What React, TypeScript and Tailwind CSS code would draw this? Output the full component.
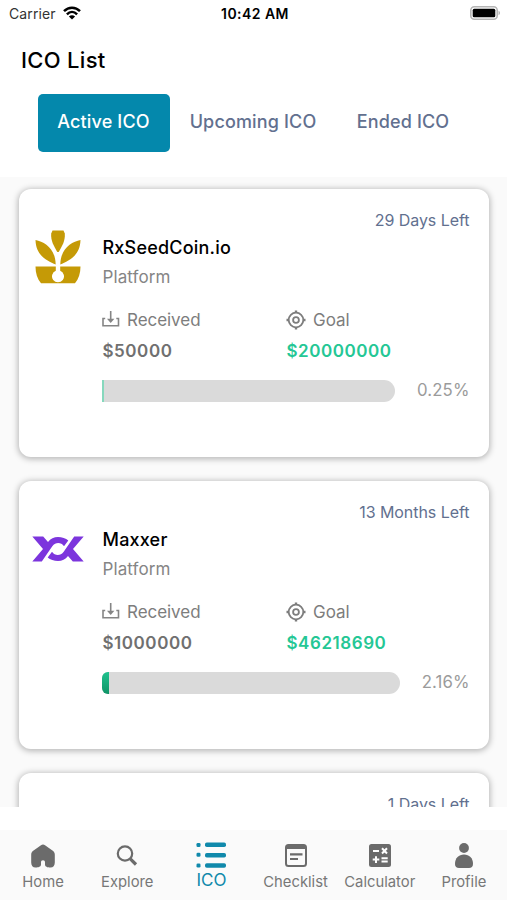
import type { ReactNode } from 'react';

type Ico = {
  name: string;
  category: string;
  left: string;
  received: string;
  goal: string;
  percent: number;
  logo: ReactNode;
};

const SeedLogo = () => (
  <svg width="46" height="54" viewBox="0 0 46 54" fill="#c59a06">
    <path d="M17.500 0.500h11l1.300 3c0.600 7-2.600 12.500-6.100 18.500h-1.400c-3.500-6-6.700-11.500-6.100-18.500z" />
    <path d="M0.500 10C9.500 12 20.300 18 20.700 34.500 13 31 1 26.500 0.500 10z" />
    <path d="M45.500 10C36.500 12 25.700 18 25.300 34.500 33 31 45 26.500 45.500 10z" />
    <path d="M0.500 36.500H20.800v4.200a6 6 0 1 0 4.400 0v-4.200h20.300c0 6.500-1.800 12.500-5.500 16.800H6C2.300 49 0.500 43 0.500 36.500z" />
  </svg>
);

const MaxxerLogo = () => (
  <svg width="52" height="26" viewBox="0 0 52 26" fill="#7c35dd">
    <path d="M0.300 25.500L11 12.900 0.300 0.400H11.200L16 6C18.500 2.700 22 1 26 1c4 0 7.800 1.200 10.300 3.500L32 10.300C29 6 23.500 6 20.300 10.300L9.800 25.500z" />
    <path
      d="M0.300 25.500L11 12.900 0.300 0.400H11.200L16 6C18.500 2.700 22 1 26 1c4 0 7.800 1.200 10.300 3.500L32 10.300C29 6 23.500 6 20.300 10.300L9.800 25.500z"
      transform="rotate(180 26 13)"
    />
  </svg>
);

const icos: Ico[] = [
  {
    name: 'RxSeedCoin.io',
    category: 'Platform',
    left: '29 Days Left',
    received: '$50000',
    goal: '$20000000',
    percent: 0.25,
    logo: <SeedLogo />,
  },
  {
    name: 'Maxxer',
    category: 'Platform',
    left: '13 Months Left',
    received: '$1000000',
    goal: '$46218690',
    percent: 2.16,
    logo: <MaxxerLogo />,
  },
  {
    name: '',
    category: '',
    left: '1 Days Left',
    received: '',
    goal: '',
    percent: 0,
    logo: null,
  },
];

const StatusBar = () => (
  <div className="grid h-[27px] grid-cols-3 items-center pr-[6px] pl-[9px] text-[14px] text-black">
    <div className="flex items-center gap-[7px]">
      <span className="tracking-[0.1px] text-[#333]">Carrier</span>
      <svg className="-mt-px" width="18" height="14" viewBox="0 0 18 14" fill="none" stroke="#000" strokeWidth="2.500">
        <path d="M1 5.200c4.600-4.600 11.400-4.600 16 0" />
        <path d="M3.900 8.300c3-3 7.200-3 10.200 0" />
        <path d="M9 13.600L5.900 10.500c1.800-1.700 4.400-1.700 6.200 0z" fill="#000" stroke="none" />
      </svg>
    </div>
    <span className="text-center font-semibold tracking-[0.45px] whitespace-nowrap">10:42 AM</span>
    <svg className="-mt-px justify-self-end" width="31" height="14" viewBox="0 0 31 14">
      <rect x="0.800" y="0.800" width="26.400" height="12.400" rx="3.500" fill="#fff" stroke="#b5b5b5" strokeWidth="1.600" />
      <rect x="2.700" y="2.700" width="22.600" height="8.600" rx="1.500" fill="#000" />
      <path d="M28.500 4.800c2 0.700 2 3.700 0 4.400z" fill="#b5b5b5" />
    </svg>
  </div>
);

const ReceivedIcon = () => (
  <svg className="-mt-[5px]" width="18" height="16" viewBox="0 0 18 16" fill="none" stroke="#858585" strokeWidth="1.600">
    <path d="M3.200 7.500H1V14.700h15.500V7.500h-2.200" />
    <path d="M8.700 0v10" />
    <path d="M5 7.800h7.400L8.700 12z" fill="#858585" stroke="none" />
  </svg>
);

const GoalIcon = () => (
  <svg className="-mt-0.5" width="20" height="20" viewBox="0 0 20 20" fill="none" stroke="#7d7d7d" strokeWidth="1.800">
    <circle cx="10" cy="10" r="7.300" />
    <circle cx="10" cy="10" r="2.900" />
    <path d="M10 0.500v2.500M10 17v2.500M0.500 10h2.500M17 10h2.500" strokeWidth="2.400" />
  </svg>
);

const IcoCard = ({ ico }: { ico: Ico }) => (
  <div className="h-[268px] shrink-0 rounded-[12px] bg-white pt-[19px] pr-[19.500px] pl-3 shadow-[0_1px_6px_1px_rgba(0,0,0,0.28)]">
    <div className="text-right text-[16px] leading-6 tracking-[-0.05px] text-[#62708f]">
      {ico.left}
    </div>
    {ico.name && (
      <div className="flex">
        <div className="-mt-[3px] flex h-[56px] w-[71px] shrink-0 items-center pr-[17px]">
          <div className="flex w-full justify-center">{ico.logo}</div>
        </div>
        <div className="min-w-0 flex-1">
          <h2 className="pl-[0.5px] text-[18px] leading-[31px] font-medium tracking-[0.2px] text-black">
            {ico.name}
          </h2>
          <p className="pl-[0.5px] text-[17px] leading-[29px] tracking-[0.1px] text-[#858585]">
            {ico.category}
          </p>
          <div className="mt-4 flex">
            <div className="w-[184px]">
              <div className="flex h-[26px] items-center gap-[7px] text-[17px] text-[#7d7d7d]">
                <ReceivedIcon />
                <span className="tracking-[-0.05px]">Received</span>
              </div>
              <div className="mt-0.5 pl-[0.5px] text-[17px] leading-[31px] font-semibold tracking-[0.55px] text-[#707070]">
                {ico.received}
              </div>
            </div>
            <div>
              <div className="flex h-[26px] items-center gap-[7px] text-[17px] text-[#7d7d7d]">
                <GoalIcon />
                <span>Goal</span>
              </div>
              <div className="mt-0.5 pl-[0.5px] text-[17px] leading-[31px] font-semibold tracking-[0.55px] text-[#24c795]">
                {ico.goal}
              </div>
            </div>
          </div>
          <div className="mt-[12.5px] flex h-[22px] items-center gap-[22px]">
            <div className="h-full flex-1 overflow-hidden rounded-r-full bg-[#dadada]">
              <div
                className={
                  ico.percent > 1
                    ? 'h-full min-w-[7px] rounded-l-[6px] bg-linear-to-b from-[#1fc28e] to-[#0f9467] shadow-[-4px_0_0_4px_#fff]'
                    : 'h-full min-w-[1.5px] bg-[#86d8bd]'
                }
                style={{ width: `${ico.percent}%` }}
              />
            </div>
            <span className="text-[16.800px] tracking-[0.1px] text-[#9b9b9b]">{ico.percent}%</span>
          </div>
        </div>
      </div>
    )}
  </div>
);

const navItems = [
  {
    label: 'Home',
    icon: (
      <svg width="24" height="24" viewBox="0 0 24 24" fill="#6b6b6b">
        <path d="M10 1.200c1.200-0.900 2.800-0.900 4 0l7.800 5.600c1.300 1 2 2.400 2 4V18.500c0 3-1.600 5-4.300 5-2.900 0-5.500-0.800-5.500-3v-2c0-1.500-0.700-2.200-2-2.200s-2 0.700-2 2.200v2c0 2.200-2.600 3-5.500 3-2.700 0-4.300-2-4.300-5v-7.700c0-1.600 0.700-3 2-4z" />
      </svg>
    ),
  },
  {
    label: 'Explore',
    icon: (
      <svg width="22" height="22" viewBox="0 0 22 22" fill="none" stroke="#6b6b6b">
        <circle cx="9" cy="8.500" r="7.200" strokeWidth="2.200" />
        <path d="M14.300 13.800l5.700 5.700" strokeWidth="3.200" />
      </svg>
    ),
  },
  {
    label: 'ICO',
    icon: (
      <svg className="-mt-px" width="30" height="26" viewBox="0 0 30 26" fill="#1089ab">
        <rect x="9" y="0.500" width="21" height="4.500" rx="1.800" />
        <rect x="9" y="11" width="21" height="4.500" rx="1.800" />
        <rect x="9" y="21.300" width="21" height="4.500" rx="1.800" />
        <rect x="0.500" y="1" width="4" height="4" rx="1.300" />
        <rect x="0.500" y="10.800" width="4" height="4" rx="1.300" />
        <rect x="0.500" y="21.500" width="4" height="4" rx="1.300" />
      </svg>
    ),
  },
  {
    label: 'Checklist',
    icon: (
      <svg width="22" height="23" viewBox="0 0 22 23" fill="none" stroke="#6b6b6b">
        <rect x="1" y="1" width="20" height="21" rx="2.500" strokeWidth="2" />
        <path d="M1 3h20" strokeWidth="4" />
        <path d="M5 10.300h12.500M5 15h8" strokeWidth="2.200" />
      </svg>
    ),
  },
  {
    label: 'Calculator',
    icon: (
      <svg width="22" height="23" viewBox="0 0 22 23" fill="none" stroke="#fff" strokeWidth="2">
        <rect x="0" y="0" width="22" height="23" rx="2.500" fill="#6b6b6b" stroke="none" />
        <path d="M4 7h6M7 12.200v6.800M3.700 15.600h6.600M12.500 14.200h6.200M12.500 17.600h6.200M13 4.300l5 5.200M18 4.300l-5 5.200" />
      </svg>
    ),
  },
  {
    label: 'Profile',
    icon: (
      <svg width="18" height="25" viewBox="0 0 18 25" fill="#6b6b6b">
        <circle cx="9" cy="5" r="4.900" />
        <path d="M0 21c0-6 3.800-9.500 9-9.500s9 3.500 9 9.500c0 2.500-1.500 4-4 4H4c-2.500 0-4-1.500-4-4z" />
      </svg>
    ),
  },
];

const App = () => {
  return (
    <div className="flex h-[900px] w-[507px] flex-col overflow-hidden bg-white font-[Inter,sans-serif]">
      <StatusBar />
      <header className="flex h-[150px] shrink-0 flex-col">
        <h1 className="mt-[17px] pl-[21px] text-[22px] leading-8 font-medium tracking-[0.3px] text-black">
          ICO List
        </h1>
        <nav className="mt-[18px] flex pl-[37.5px] text-[18px] leading-[56px] font-medium tracking-[0.15px] text-[#62708f]">
          <button className="h-[58px] w-[132px] rounded-[5px] bg-[#0488ac] pb-0.5 text-white">
            Active ICO
          </button>
          <button className="w-[167px] pb-0.5">Upcoming ICO</button>
          <button className="w-[133px] pb-0.5">Ended ICO</button>
        </nav>
      </header>
      <main className="flex h-[630px] shrink-0 flex-col gap-6 overflow-hidden bg-[#fafafa] pt-3 pr-[18px] pl-[19px]">
        {icos.map((ico) => (
          <IcoCard key={ico.left} ico={ico} />
        ))}
      </main>
      <footer className="mt-[23px] grid h-[70px] grid-cols-6 bg-[#fafafa] px-px text-[14.800px] text-[#777]">
        {navItems.map((item) => (
          <div key={item.label} className="flex flex-col items-center">
            <div className="mt-3 flex h-[27px] items-center justify-center">{item.icon}</div>
            {item.label === 'ICO' ? (
              <span className="text-[17px] leading-[23px] text-[#1089ab]">{item.label}</span>
            ) : (
              <span className="mt-0.5 leading-[22px]">{item.label}</span>
            )}
          </div>
        ))}
      </footer>
    </div>
  );
};

export default App;
